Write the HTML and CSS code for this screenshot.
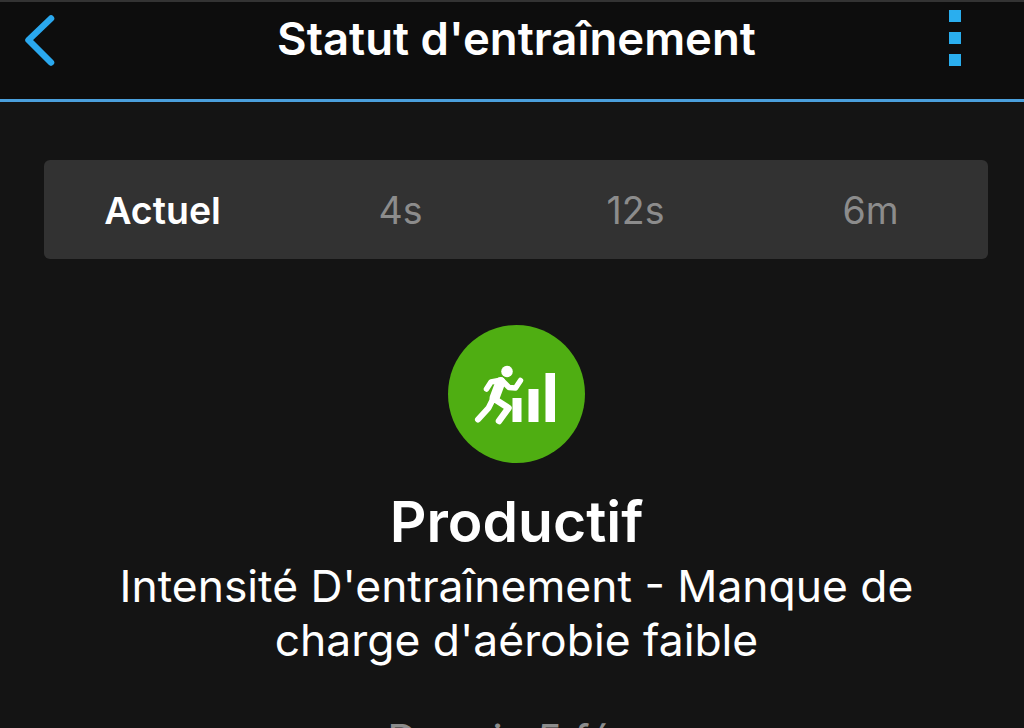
FILE: index.html
```html
<!DOCTYPE html>
<html lang="fr">
<head>
    <meta charset="UTF-8">
    <meta name="viewport" content="width=device-width, initial-scale=1.0">
    <title>Statut d'entraînement</title>
    <link rel="stylesheet" href="styles.css">
</head>
<body>

    <!-- Top Bar -->
    <header class="top-bar">
        <svg class="back-icon" width="32" height="54" viewBox="0 0 32 54">
            <path d="M27 5.500 L4.500 27 L27 49.500" fill="none" stroke="#2aa8ee" stroke-width="6.500" stroke-linecap="round" stroke-linejoin="round"/>
        </svg>
        <h1 class="top-title">Statut d'entraînement</h1>
        <div class="more-menu">
            <span class="dot"></span>
            <span class="dot"></span>
            <span class="dot"></span>
        </div>
    </header>

    <!-- Period Tabs -->
    <nav class="tabs">
        <div class="tab active">Actuel</div>
        <div class="tab">4s</div>
        <div class="tab">12s</div>
        <div class="tab">6m</div>
    </nav>

    <!-- Status Summary -->
    <section class="status">
        <div class="status-badge">
            <svg width="137" height="137" viewBox="7.500 5 137 137">
                <!-- Runner -->
                <circle cx="66.500" cy="51.500" r="5.800" fill="#fff"/>
                <path d="M46 69 L50.500 62 L61 60 L68.500 67.500 L75 68 L80 60.500" fill="none" stroke="#fff" stroke-width="5.500" stroke-linecap="round" stroke-linejoin="round"/>
                <path d="M60 62 L54 78" fill="none" stroke="#fff" stroke-width="10" stroke-linecap="round"/>
                <path d="M54 79 L68 88 L58.500 101" fill="none" stroke="#fff" stroke-width="6.500" stroke-linecap="round" stroke-linejoin="round"/>
                <path d="M52 80 L48 88 L37.500 99.500" fill="none" stroke="#fff" stroke-width="6" stroke-linecap="round" stroke-linejoin="round"/>
                <!-- Bars -->
                <rect x="72" y="78" width="9" height="24" fill="#fff"/>
                <rect x="88" y="69" width="10" height="33" fill="#fff"/>
                <rect x="105" y="53" width="9.500" height="49" fill="#fff"/>
            </svg>
        </div>
        <div class="status-name">Productif</div>
        <p class="status-text">Intensité D'entraînement - Manque de<br>charge d'aérobie faible</p>
        <p class="status-date">Depuis 5 fév.</p>
    </section>

</body>
</html>
```

FILE: styles.css
```css
/* General Reset */
* {
    margin: 0;
    padding: 0;
    box-sizing: border-box;
}

html {
    overflow: hidden;
}

/* Body and Background */
body {
    font-family: Inter, "Noto Sans", sans-serif;
    background-color: #141414;
    color: white;
    height: 728px;
    overflow: hidden;
}

/* Top Bar */
.top-bar {
    display: flex;
    align-items: center;
    height: 102px;
    padding: 0 63px 0 24px;
    background-color: #0d0d0d;
    border-top: 2px solid #333;
    border-bottom: 3px solid #4a9fdc;
}

.back-icon {
    display: block;
    margin-top: -22px;
}

.top-title {
    flex: 1;
    margin-left: 28px;
    margin-top: -24px;
    font-size: 45.500px;
    font-weight: 600;
    text-align: center;
}

.more-menu {
    display: flex;
    flex-direction: column;
    gap: 10px;
    margin-top: -26px;
}

.dot {
    width: 12px;
    height: 12px;
    background-color: #2aaeee;
}

/* Period Tabs */
.tabs {
    display: grid;
    grid-template-columns: repeat(4, 1fr);
    align-items: center;
    height: 99px;
    margin: 58px 36px 0 44px;
    padding: 2px 0 0 4px;
    background-color: #323232;
    border-radius: 6px;
    font-size: 37.500px;
    color: #8c8c8c;
    text-align: center;
}

.tab.active {
    padding-right: 6px;
    color: white;
    font-weight: 600;
}

/* Status Summary */
.status {
    display: flex;
    flex-direction: column;
    align-items: center;
    padding-top: 66px;
    padding-left: 9px;
}

.status-badge {
    width: 137px;
    height: 138px;
    border-radius: 50%;
    background-color: #4fae12;
}

.status-badge svg {
    display: block;
}

.status-name {
    font-size: 57px;
    font-weight: 600;
    line-height: 68px;
    margin-top: 25px;
}

.status-text {
    margin-top: 3px;
    font-size: 44.400px;
    line-height: 54px;
    text-align: center;
}

.status-date {
    margin-top: 48px;
    font-size: 42px;
    line-height: 50px;
    color: #8c8c8c;
}
```
